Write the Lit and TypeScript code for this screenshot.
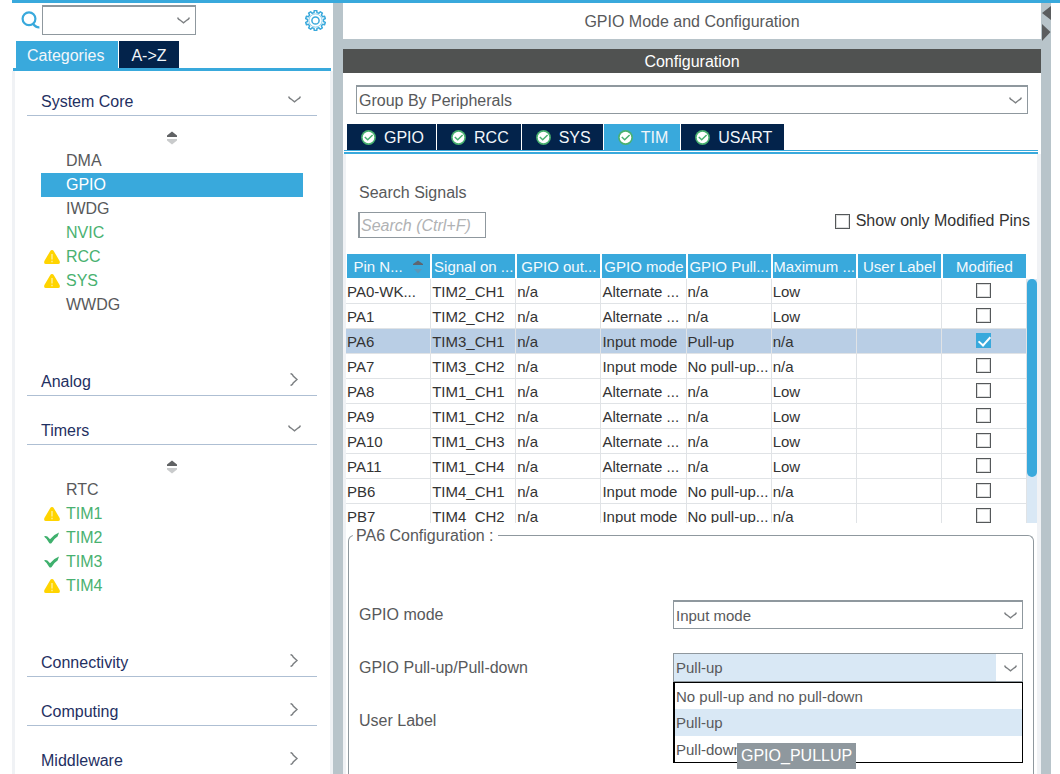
import { LitElement, html, svg, css, nothing } from "lit";
import { customElement, state } from "lit/decorators.js";
import { classMap } from "lit/directives/class-map.js";

type Mark = "warn" | "ok" | "";
interface Peripheral { name: string; mark?: Mark; active?: boolean; used?: boolean }
interface Category { name: string; items?: Peripheral[] }

const CATEGORIES: Category[] = [
  {
    name: "System Core",
    items: [
      { name: "DMA" },
      { name: "GPIO", active: true },
      { name: "IWDG" },
      { name: "NVIC", used: true },
      { name: "RCC", used: true, mark: "warn" },
      { name: "SYS", used: true, mark: "warn" },
      { name: "WWDG" },
    ],
  },
  { name: "Analog" },
  {
    name: "Timers",
    items: [
      { name: "RTC" },
      { name: "TIM1", used: true, mark: "warn" },
      { name: "TIM2", used: true, mark: "ok" },
      { name: "TIM3", used: true, mark: "ok" },
      { name: "TIM4", used: true, mark: "warn" },
    ],
  },
  { name: "Connectivity" },
  { name: "Computing" },
  { name: "Middleware" },
];

const COLUMNS = ["Pin N...", "Signal on ...", "GPIO out...", "GPIO mode", "GPIO Pull...", "Maximum ...", "User Label", "Modified"];

const PINS: string[][] = [
  ["PA0-WK...", "TIM2_CH1", "n/a", "Alternate ...", "n/a", "Low"],
  ["PA1", "TIM2_CH2", "n/a", "Alternate ...", "n/a", "Low"],
  ["PA6", "TIM3_CH1", "n/a", "Input mode", "Pull-up", "n/a"],
  ["PA7", "TIM3_CH2", "n/a", "Input mode", "No pull-up...", "n/a"],
  ["PA8", "TIM1_CH1", "n/a", "Alternate ...", "n/a", "Low"],
  ["PA9", "TIM1_CH2", "n/a", "Alternate ...", "n/a", "Low"],
  ["PA10", "TIM1_CH3", "n/a", "Alternate ...", "n/a", "Low"],
  ["PA11", "TIM1_CH4", "n/a", "Alternate ...", "n/a", "Low"],
  ["PB6", "TIM4_CH1", "n/a", "Input mode", "No pull-up...", "n/a"],
  ["PB7", "TIM4_CH2", "n/a", "Input mode", "No pull-up...", "n/a"],
];

const chevronDown = html`<svg class="chev" width="13" height="8" viewBox="0 0 13 8" aria-hidden="true">
  <path d="M.6 .5 Q1.2 2.4 3 3 L6.5 5.8 L10 3 Q11.8 2.4 12.4 .5" fill="none" stroke="#7d8083" stroke-width="1.4"/></svg>`;
const chevronRight = html`<svg class="chev" width="13" height="13" viewBox="0 0 13 13" aria-hidden="true">
  <path d="M2.5 .5 Q4.6 1 5.2 3 L9 6.5 L5.2 10 Q4.6 12 2.5 12.5" fill="none" stroke="#7d8083" stroke-width="1.4"/></svg>`;
const sortIcon = html`<svg width="12" height="14" viewBox="0 0 12 14" aria-hidden="true">
  <path d="M6 .5 L11 4.5 V6 H1 V4.5 Z" fill="#606264"/><path d="M1 8 H11 V9.5 L6 13.5 L1 9.5 Z" fill="#c9cbcc"/></svg>`;
const headSortIcon = html`<svg width="12" height="14" viewBox="0 0 12 14" aria-hidden="true">
  <path d="M6 .5 L11 4 V5 H1 V4 Z" fill="#5f6670"/><path d="M2 9 H10 L6 13.5 Z" fill="#5b97b9"/></svg>`;
const warnIcon = html`<svg width="16" height="14" viewBox="0 0 16 14" role="img" aria-label="Warning">
  <path d="M8 0 Q9.2 0 10 1.4 L15.6 11 Q16.6 14 14 14 H2 Q-.6 14 .4 11 L6 1.4 Q6.8 0 8 0Z" fill="#ffd400"/>
  <path d="M8 4 V9.4 M8 10.8 V12.2" stroke="#fff3b0" stroke-width="1.2"/></svg>`;
const okIcon = html`<svg width="16" height="12" viewBox="0 0 16 12" role="img" aria-label="Configured">
  <path d="M0 4.6 Q1.5 3.6 3.4 4.6 L6 7.2 Q9.6 2.6 15 .5 L13.6 4.4 Q9.8 6.6 7.6 11 Q6.4 12 5.2 11 Q3.2 7 0 4.6Z" fill="#3fb06d"/></svg>`;
const badgeIcon = html`<svg width="15" height="15" viewBox="0 0 15 15" aria-hidden="true">
  <circle cx="7.5" cy="7.5" r="7.4" fill="#49b170"/><circle cx="7.5" cy="7.5" r="5.8" fill="#fff"/>
  <path d="M3.8 7 L6.7 9.8 L11.6 5" fill="none" stroke="#49b170" stroke-width="1.5"/></svg>`;

const gearPath = (() => {
  const teeth = 10;
  const parts: string[] = [];
  for (let i = 0; i < teeth; i++) {
    const steps: [number, number][] = [[-0.3, 8], [-0.2, 10], [0.2, 10], [0.3, 8]];
    for (const [offset, radius] of steps) {
      const angle = ((i + offset) / teeth) * Math.PI * 2;
      parts.push(`${(10.5 + Math.sin(angle) * radius).toFixed(2)} ${(10.5 - Math.cos(angle) * radius).toFixed(2)}`);
    }
  }
  return `M${parts.join("L")}Z`;
})();

@customElement("app-root")
export class AppRoot extends LitElement {
  @state() private peripheral = "TIM";

  static styles = css`
    :host {
      display: grid;
      grid-template-columns: 12px 321px 10px minmax(0, 1fr) 10px 9px;
      grid-template-rows: 3px minmax(0, 1fr);
      height: 100vh;
      overflow: hidden;
      background: #fff;
      color: #58595b;
      font: 16px/20px "Liberation Sans", Arial, sans-serif;
    }
    * { box-sizing: border-box; }
    button, input, select { font: inherit; color: inherit; margin: 0; border-radius: 0; }
    button { border: 0; background: none; padding: 0; cursor: pointer; text-align: left; }
    svg { display: block; flex: none; }
    .topline { grid-column: 2 / -1; background: #39a9dc; }
    .side { grid-column: 2; grid-row: 2; display: flex; flex-direction: column; min-height: 0; }
    .split { grid-row: 2; background: #b8c4ca; }
    .split.first { grid-column: 3; }
    .split.last { grid-column: 5; padding-top: 2px; }
    .main { grid-column: 4; grid-row: 2; display: flex; flex-direction: column; min-height: 0; }

    .combo { position: relative; display: block; line-height: 20px; }
    .combo select {
      display: block; width: 100%; height: 29px; padding: 1px 28px 0 2px;
      appearance: none; background: #fff; border: 1px solid #8f989e; border-top-width: 2px; outline: 0;
    }
    .combo .chev { position: absolute; right: 6px; top: 12px; pointer-events: none; }

    .find { display: flex; align-items: center; padding: 0 7px 0 9px; height: 34px; }
    .find .combo { width: 154px; margin-left: 2px; }
    .find .combo select { height: 30px; }
    .find .gear { margin-left: auto; }
    .tabs { display: flex; gap: 1px; }
    .tabs button { background: #03234b; color: #f2f6fa; }
    .tabs button.on { background: #39a9dc; }
    .side .tabs { padding: 4px 4px 0; }
    .side .tabs button { height: 27px; padding: 2px 12px 0; }
    .side .tabs button.on { padding: 2px 14px 0 11px; }
    .side .tree {
      flex: 1; min-height: 0; overflow: hidden; display: flex; flex-direction: column; gap: 4px;
      border: solid #f0f2f5; border-width: 0 3px; padding: 0 13px 0 12px;
    }
    .rule { height: 3px; margin: 0 2px 0 1px; background: #39a9dc; flex: none; }
    .cat { flex: none; }
    .cat h2 { margin: 0; font: inherit; }
    .cat h2 button {
      display: flex; justify-content: space-between; align-items: center; width: 100%;
      padding: 21px 16px 3px 14px; color: #1f3062; border-bottom: 1px solid #aebfd3;
    }
    .cat h2 .chev { margin-bottom: 5px; }
    .cat .sort { display: block; margin: 15px auto 0; }
    .cat ul { list-style: none; margin: 4px 14px 30px; padding: 0; }
    .cat li button { display: flex; align-items: center; gap: 6px; width: 100%; height: 24px; padding-left: 3px; }
    .mark { width: 16px; }
    .used { color: #49b170; }
    .cat li .active { background: #39a9dc; color: #fff; }

    .title { background: #fff; height: 36px; padding-top: 1px; line-height: 36px; text-align: center; margin: 0; font-size: 16px; font-weight: 400; }
    .gap { height: 10px; background: #b8c4ca; }
    .bar { background: #505251; color: #fff; height: 24px; padding-top: 1px; line-height: 24px; text-align: center; margin: 0; font-size: 16px; font-weight: 400; }
    .group { margin: 12px 13px 10px; }
    .main .tabs { padding-left: 4px; }
    .main .tabs button { display: flex; align-items: center; gap: 8px; height: 26px; padding: 1px 12px 0 14px; }
    .double { height: 4px; margin: 0 3px 0 1px; border: solid #39a9dc; border-width: 1px 0 2px; flex: none; }
    .pane { flex: 1; min-height: 0; border: solid #f0f2f5; border-width: 0 4px 0 3px; overflow: hidden; display: flex; flex-direction: column; }
    .filter { display: flex; justify-content: space-between; align-items: flex-end; padding: 29px 7px 16px 12px; flex: none; }
    .filter .signals { display: flex; flex-direction: column; gap: 9px; }
    .signals span { padding-left: 1px; }
    .signals input { width: 128px; height: 26px; border: 1px solid #8f989e; border-left-width: 2px; padding: 1px 1px 0; outline: 0; }
    .signals input::placeholder { color: #b0b2b4; font-style: italic; opacity: 1; }
    .only { display: flex; align-items: center; gap: 6px; color: #333; padding-bottom: 7px; }
    input[type="checkbox"] {
      appearance: none; display: block; position: relative; width: 15px; height: 15px;
      border: 1px solid #55585a; background: #fff; box-shadow: inset 0 0 0 1px #dcdddd;
    }
    input[type="checkbox"]:checked { background: #39a9dc; border-color: #39a9dc; box-shadow: none; }
    input[type="checkbox"]:checked::after {
      content: ""; position: absolute; left: 4px; top: 0; width: 5px; height: 10px;
      border: solid #fff; border-width: 0 2px 2px 0; transform: rotate(42deg);
    }
    .grid { display: flex; flex: none; max-height: 269px; overflow: hidden; }
    .rows { flex: 1; min-width: 0; }
    table { width: 100%; table-layout: fixed; border-spacing: 0; font-size: 15px; color: #333; }
    th, td { height: 25px; padding: 1px 0 0 1px; white-space: nowrap; overflow: hidden; text-align: left; font-weight: 400; }
    th { background: #39a9dc; color: #f4fafd; border: solid #fff; border-width: 0 1px 1px; padding-left: 0; }
    th .head { display: flex; justify-content: center; align-items: center; gap: 9px; }
    td { border: solid #e0e3e6; border-width: 0 1px 1px 0; }
    td.tick { vertical-align: top; padding: 4px 0 0; }
    tr.sel td { background: #b9cee5; }
    td input[type="checkbox"] { margin: 0 auto; }
    .track { width: 10px; margin-top: 25px; background: #d9e8f5; }
    .thumb { height: 198px; background: #39a9dc; border-radius: 5px; }

    fieldset { flex: 1; margin: 3px 3px 0 2px; padding: 55px 10px 0; border: 1px solid #8f989e; border-bottom: 0; border-radius: 6px 6px 0 0; min-width: 0; }
    legend { padding: 1px 0 0 3px; line-height: 18px; margin-left: -6px; width: 145px; white-space: nowrap; }
    .form { display: grid; grid-template-columns: minmax(0, 314px) minmax(0, 1fr); row-gap: 24px; align-items: center; font-size: 16px; line-height: 29px; }
    .form .combo, .pick { font-size: 15px; }
    .pull { position: relative; }
    .pull .combo select { border-top-width: 1px; background: linear-gradient(to left, #fff 26px, #d9e8f5 26px); }
    .pick {
      position: absolute; left: 0; right: 0; top: 29px; margin: 0; padding: 0; list-style: none;
      background: #fff; border: 1px solid #000; border-left-width: 2px;
    }
    .pick button { display: block; width: 100%; height: 26px; padding-left: 1px; line-height: 27px; }
    .pick .on { background: #d9e8f5; height: 27px; }
    .tip { position: absolute; left: 64px; top: 90px; height: 26px; line-height: 26px; padding: 0 4px; background: #8f989e; color: #fff; }
  `;

  private mark(mark?: Mark) {
    return html`<span class="mark">${mark === "warn" ? warnIcon : mark === "ok" ? okIcon : nothing}</span>`;
  }

  private category(cat: Category) {
    return html`<section class="cat">
      <h2><button aria-expanded=${cat.items ? "true" : "false"}>${cat.name}${cat.items ? chevronDown : chevronRight}</button></h2>
      ${cat.items
        ? html`<button class="sort" aria-label="Sort ${cat.name}">${sortIcon}</button>
            <ul>${cat.items.map((p) => html`<li>
              <button class=${classMap({ active: !!p.active, used: !!p.used })}>${this.mark(p.mark)}${p.name}</button>
            </li>`)}</ul>`
        : nothing}
    </section>`;
  }

  render() {
    return html`
      <div class="topline"></div>
      <nav class="side">
        <div class="find">
          <svg width="19" height="19" viewBox="0 0 19 19" aria-hidden="true">
            <circle cx="8" cy="7.8" r="6.4" fill="none" stroke="#39a9dc" stroke-width="2.2"/>
            <path d="M11.8 12.4 Q14.6 16.6 18.4 16.4" fill="none" stroke="#39a9dc" stroke-width="2.4"/>
          </svg>
          <label class="combo"><select aria-label="Search peripherals"><option></option></select>${chevronDown}</label>
          <button class="gear" aria-label="Settings">
            <svg width="21" height="21" viewBox="0 0 21 21">
              ${svg`<path d=${gearPath} fill="none" stroke="#39a9dc" stroke-width="1.5" stroke-linejoin="round"/>`}
              <circle cx="10.5" cy="10.5" r="3.6" fill="none" stroke="#39a9dc" stroke-width="1.5"/>
              <circle cx="10.5" cy="10.5" r="6.6" fill="none" stroke="#8fd0ec" stroke-width="1"/>
            </svg>
          </button>
        </div>
        <div class="tabs"><button class="on">Categories</button><button>A-&gt;Z</button></div>
        <div class="rule"></div>
        <div class="tree">${CATEGORIES.map((c) => this.category(c))}</div>
      </nav>
      <div class="split first"></div>
      <main class="main">
        <h1 class="title">GPIO Mode and Configuration</h1>
        <div class="gap"></div>
        <h2 class="bar">Configuration</h2>
        <label class="combo group"><select aria-label="Grouping"><option>Group By Peripherals</option></select>${chevronDown}</label>
        <div class="tabs">
          ${["GPIO", "RCC", "SYS", "TIM", "USART"].map((name) => html`<button
            class=${classMap({ on: name === this.peripheral })}
            @click=${() => (this.peripheral = name)}>${badgeIcon}${name}</button>`)}
        </div>
        <div class="double"></div>
        <div class="pane">
          <div class="filter">
            <label class="signals"><span>Search Signals</span><input type="text" placeholder="Search (Ctrl+F)" /></label>
            <label class="only"><input type="checkbox" />Show only Modified Pins</label>
          </div>
          <div class="grid">
            <div class="rows">
              <table>
                <thead><tr>${COLUMNS.map((c, i) => html`<th scope="col"><div class="head">${c}${i === 0 ? headSortIcon : nothing}</div></th>`)}</tr></thead>
                <tbody>
                  ${PINS.map((pin) => html`<tr class=${classMap({ sel: pin[0] === "PA6" })}>
                    ${pin.map((v) => html`<td>${v}</td>`)}<td></td>
                    <td class="tick"><input type="checkbox" aria-label="${pin[0]} modified" .checked=${pin[0] === "PA6"} /></td>
                  </tr>`)}
                </tbody>
              </table>
            </div>
            <div class="track"><div class="thumb"></div></div>
          </div>
          <fieldset>
            <legend>PA6 Configuration :</legend>
            <div class="form">
              <label for="mode">GPIO mode</label>
              <div class="combo"><select id="mode"><option>Input mode</option></select>${chevronDown}</div>
              <label for="pull">GPIO Pull-up/Pull-down</label>
              <div class="pull">
                <div class="combo"><select id="pull"><option>Pull-up</option></select>${chevronDown}</div>
                <ul class="pick">
                  <li><button>No pull-up and no pull-down</button></li>
                  <li><button class="on">Pull-up</button></li>
                  <li><button>Pull-down</button></li>
                </ul>
                <div class="tip" role="tooltip">GPIO_PULLUP</div>
              </div>
              <span>User Label</span>
            </div>
          </fieldset>
        </div>
      </main>
      <div class="split last">
        <svg width="10" height="37" viewBox="0 0 10 37" aria-hidden="true">
          <path d="M10 1 V15 L1 8 Z M1 19 L9.5 27 L1 36 Z" fill="#5b5d5f"/>
        </svg>
      </div>
    `;
  }
}
